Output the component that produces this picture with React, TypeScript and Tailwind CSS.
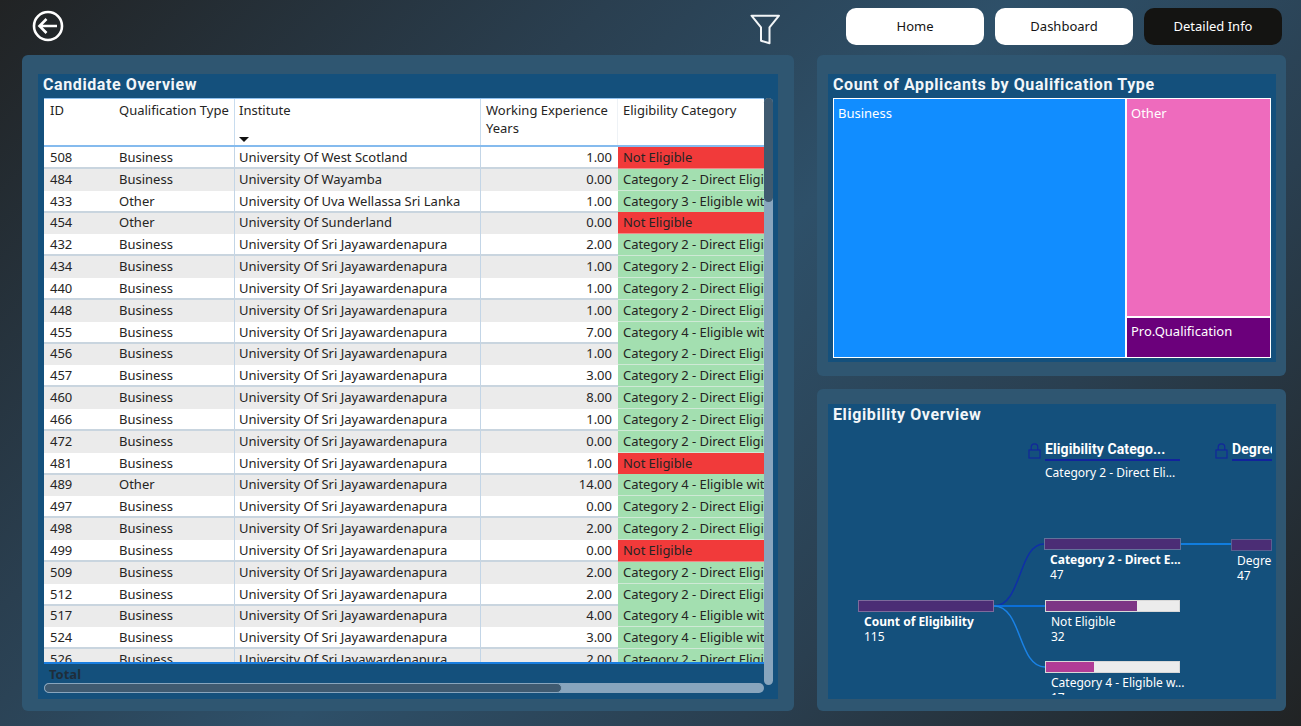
const SJP = "University Of Sri Jayawardenapura";
const C2 = "Category 2 - Direct Eligibility";
const C3 = "Category 3 - Eligible with Conditions";
const C4 = "Category 4 - Eligible with Experience";
const NE = "Not Eligible";

const rows: [string, string, string, string, string][] = [
  ["508", "Business", "University Of West Scotland", "1.00", NE],
  ["484", "Business", "University Of Wayamba", "0.00", C2],
  ["433", "Other", "University Of Uva Wellassa Sri Lanka", "1.00", C3],
  ["454", "Other", "University Of Sunderland", "0.00", NE],
  ["432", "Business", SJP, "2.00", C2],
  ["434", "Business", SJP, "1.00", C2],
  ["440", "Business", SJP, "1.00", C2],
  ["448", "Business", SJP, "1.00", C2],
  ["455", "Business", SJP, "7.00", C4],
  ["456", "Business", SJP, "1.00", C2],
  ["457", "Business", SJP, "3.00", C2],
  ["460", "Business", SJP, "8.00", C2],
  ["466", "Business", SJP, "1.00", C2],
  ["472", "Business", SJP, "0.00", C2],
  ["481", "Business", SJP, "1.00", NE],
  ["489", "Other", SJP, "14.00", C4],
  ["497", "Business", SJP, "0.00", C2],
  ["498", "Business", SJP, "2.00", C2],
  ["499", "Business", SJP, "0.00", NE],
  ["509", "Business", SJP, "2.00", C2],
  ["512", "Business", SJP, "2.00", C2],
  ["517", "Business", SJP, "4.00", C4],
  ["524", "Business", SJP, "3.00", C4],
  ["526", "Business", SJP, "2.00", C2],
];

const body = "font-['Noto_Sans',sans-serif]";
const title = "font-['Roboto',sans-serif] font-bold text-[16px] tracking-[0.6px] text-[#f2f6f9]";
const cols = "grid grid-cols-[71px_120px_246px_137px_146px]";

function Lock({ className }: { className: string }) {
  return (
    <svg className={className} width="13" height="16" viewBox="0 0 13 16" fill="none" stroke="#12279b" strokeWidth="1.2">
      <rect x="1" y="7" width="11" height="8" />
      <path d="M3.2 7V4.2a3.3 3.3 0 0 1 6.6 0V7" />
    </svg>
  );
}

function Table() {
  return (
    <div className="flex ml-[6px]">
      <div className="w-[720px] flex flex-col">
        <div className={`h-[566px] overflow-hidden bg-white border-t-[1px] border-b-[2px] border-t-[#8fc0ee] border-b-[#1a7ee0] text-[13px] text-[#252423] ${body}`}>
          <div className={`${cols} h-[48px] border-b-[2px] border-[#85bbee]`}>
            <div className="pl-[6px] pt-[2px]">ID</div>
            <div className="pl-[4px] pt-[2px] border-r-[1px] border-[#c8dcee] whitespace-nowrap">Qualification Type</div>
            <div className="pl-[4px] pt-[2px] border-r-[1px] border-[#c8dcee] relative">
              Institute
              <div className="absolute left-[4px] bottom-[3px] w-0 h-0 border-l-[5px] border-r-[5px] border-t-[5px] border-l-transparent border-r-transparent border-t-[#111]" />
            </div>
            <div className="pl-[5px] pt-[2px] leading-[18px] border-r-[1px] border-[#eef2f6]">Working Experience Years</div>
            <div className="pl-[5px] pt-[2px]">Eligibility Category</div>
          </div>
          {rows.map((r, i) => {
            const edge = i % 2 ? "" : "border-b-[2px] border-b-[#c9d5df]";
            return (
              <div key={r[0]} className={`${cols} h-[21.83px] leading-[20px] ${i % 2 ? "bg-[#ebebeb]" : "bg-white"}`}>
                <div className={`pl-[6px] ${edge}`}>{r[0]}</div>
                <div className={`pl-[4px] border-r-[1px] border-r-[#c3d5e6] ${edge}`}>{r[1]}</div>
                <div className={`pl-[4px] border-r-[1px] border-r-[#c3d5e6] whitespace-nowrap ${edge}`}>{r[2]}</div>
                <div className={`pr-[6px] text-right ${edge}`}>{r[3]}</div>
                <div className={`pl-[5px] whitespace-nowrap overflow-hidden tracking-[-0.05px] border-b-[1px] ${r[4] === NE ? "bg-[#f13a3a] border-b-[#f08a8a]" : "bg-[#a3dfb0] border-b-[#cfe9d6]"}`}>{r[4]}</div>
              </div>
            );
          })}
        </div>
        <div className={`h-[19px] pl-[5px] leading-[20px] text-[13px] font-bold text-[#1f2d3a] ${body}`}>Total</div>
        <div className="h-[10px] rounded-full bg-[#88a5bd]">
          <div className="h-full w-[518px] rounded-full bg-[#3f5a70] border-[1px] border-[#88a5bd]" />
        </div>
      </div>
      <div className="w-[9px] h-[587px] rounded-full bg-[#88a5bd]">
        <div className="w-full h-[104px] rounded-full bg-[#3f5a70]" />
      </div>
    </div>
  );
}

function Treemap() {
  return (
    <div className={`mx-[5px] flex h-[260px] border-[1px] border-white text-[13px] text-white ${body}`}>
      <div className="w-[292px] bg-[#118dff] pl-[4px] pt-[5px] border-r-[1px] border-white">Business</div>
      <div className="flex-1 flex flex-col">
        <div className="h-[218px] bg-[#ee6bbd] pl-[4px] pt-[5px] border-l-[1px] border-b-[1px] border-white">Other</div>
        <div className="flex-1 bg-[#6b007b] pl-[4px] pt-[4px] border-l-[1px] border-t-[1px] border-white">Pro.Qualification</div>
      </div>
    </div>
  );
}

function Node({ x, y, w, fill, fillW, border, label, value, bold }: { x: number; y: number; w: number; fill: string; fillW?: number; border: string; label: string; value: string; bold?: boolean }) {
  return (
    <div className="absolute" style={{ left: x, top: y, width: w }}>
      <div className="h-[12px] bg-[#ececec] border-[1px] flex" style={{ borderColor: border }}>
        <div className="h-full" style={{ width: fillW ?? "100%", background: fill }} />
      </div>
      <div className={`pl-[6px] mt-[2px] text-[12px] leading-[15px] text-white whitespace-nowrap ${bold ? "font-bold" : ""} ${body}`}>{label}</div>
      <div className={`pl-[6px] text-[12px] leading-[15px] text-white ${body}`}>{value}</div>
    </div>
  );
}

function Tree() {
  return (
    <div className="relative h-[267px] overflow-hidden mr-[4px]">
      <svg className="absolute left-0 top-0" width="444" height="271" viewBox="828 428 444 271" fill="none">
        <path d="M994 606 C1022 606 1018 544 1044 544" stroke="#0f2fa8" strokeWidth="1.5" />
        <path d="M994 606 H1045" stroke="#0b6fd8" strokeWidth="2" />
        <path d="M994 606 C1022 606 1018 667 1045 667" stroke="#1a82e6" strokeWidth="1.5" />
        <path d="M1181 544 H1231" stroke="#118dff" strokeWidth="1.5" />
      </svg>

      <Lock className="absolute left-[200px] top-[15px]" />
      <div className="absolute left-[217px] top-[13px] w-[135px] h-[20px] border-b-[2px] border-[#12239c] font-['Roboto',sans-serif] font-bold text-[14px] leading-[17px] tracking-[0.1px] text-white whitespace-nowrap">Eligibility Catego...</div>
      <div className={`absolute left-[217px] top-[37px] text-[12px] leading-[16px] text-white whitespace-nowrap ${body}`}>Category 2 - Direct Eli...</div>
      <Lock className="absolute left-[387px] top-[15px]" />
      <div className="absolute left-[404px] top-[13px] w-[40px] h-[20px] overflow-hidden border-b-[2px] border-[#12239c] font-['Roboto',sans-serif] font-bold text-[14px] leading-[17px] tracking-[0.1px] text-white whitespace-nowrap">Degree</div>

      <Node x={30} y={172} w={136} fill="#4b2d75" border="#7d6b9c" label="Count of Eligibility" value="115" bold />
      <Node x={216} y={110} w={137} fill="#4b2d75" border="#63729a" label="Category 2 - Direct E..." value="47" bold />
      <Node x={217} y={172} w={135} fill="#7d3585" fillW={91} border="#d8d8d8" label="Not Eligible" value="32" />
      <Node x={217} y={233} w={135} fill="#b03c96" fillW={48} border="#d8d8d8" label="Category 4 - Eligible w..." value="17" />
      <div className="absolute left-[403px] top-[111px] w-[41px] overflow-hidden">
        <Node x={0} y={0} w={41} fill="#4b2d75" border="#5a5f90" label="Degree" value="47" />
        <div className="h-[44px]" />
      </div>
    </div>
  );
}

export default function App() {
  return (
    <div className="w-[1301px] h-[726px] overflow-hidden flex flex-col bg-[linear-gradient(135deg,#212324_0%,#2a3f50_30%,#2e5069_50%,#2a3f50_72%,#212324_100%)]">
      <header className={`h-[55px] flex items-start ${body}`}>
        <svg className="ml-[32px] mt-[10px]" width="33" height="33" viewBox="0 0 33 33" fill="none" stroke="#fff">
          <circle cx="16" cy="16" r="14" strokeWidth="2.6" />
          <path d="M7.5 16H25M14.5 9 7.5 16l7 7" strokeWidth="2.6" />
        </svg>
        <svg className="ml-[685px] mt-[14px]" width="30" height="32" viewBox="0 0 30 32" fill="none" stroke="#f2f5f7" strokeWidth="2" strokeLinejoin="round">
          <path d="M1.5 1.7H29L19.5 13.3V29.3L11 26.7V13.3Z" />
        </svg>
        <div className="ml-[66px] mt-[8px] flex gap-[11px] text-[13px]">
          <div className="w-[138px] h-[37px] pt-[1px] rounded-[10px] bg-white text-[#141414] flex items-center justify-center">Home</div>
          <div className="w-[138px] h-[37px] pt-[1px] rounded-[10px] bg-white text-[#141414] flex items-center justify-center">Dashboard</div>
          <div className="w-[138px] h-[37px] pt-[1px] rounded-[10px] bg-[#141412] text-white flex items-center justify-center">Detailed Info</div>
        </div>
      </header>

      <main className="flex pl-[22px] gap-[23px]">
        <section className="w-[772px] h-[656px] rounded-[6px] bg-[#2f5671] pt-[19px] pl-[16px] pr-[16px]">
          <div className="h-[625px] bg-[#14507c]">
            <div className={`h-[24px] pl-[5px] leading-[22px] ${title}`}>Candidate Overview</div>
            <Table />
          </div>
        </section>

        <div className="w-[469px] flex flex-col gap-[13px]">
          <section className="h-[321px] rounded-[6px] bg-[#2f5671] pt-[19px] pl-[11px] pr-[10px]">
            <div className="h-[288px] bg-[#14507c]">
              <div className={`h-[24px] pl-[5px] leading-[22px] ${title} tracking-[0.4px]`}>Count of Applicants by Qualification Type</div>
              <Treemap />
            </div>
          </section>
          <section className="h-[322px] rounded-[6px] bg-[#2f5671] pt-[15px] pl-[11px] pr-[10px]">
            <div className="h-[295px] bg-[#14507c]">
              <div className={`h-[24px] pl-[5px] leading-[22px] ${title}`}>Eligibility Overview</div>
              <Tree />
            </div>
          </section>
        </div>
      </main>
    </div>
  );
}
